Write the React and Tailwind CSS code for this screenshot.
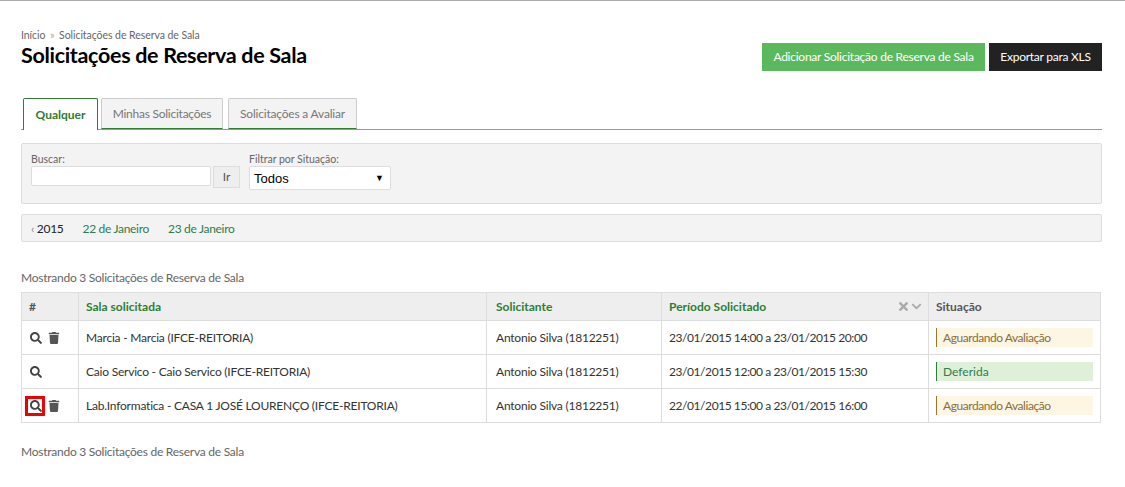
import { FaSearch, FaTrash, FaTimes, FaChevronDown } from 'react-icons/fa'

const rows = [
  { sala: 'Marcia - Marcia (IFCE-REITORIA)', periodo: '23/01/2015 14:00 a 23/01/2015 20:00', situacao: 'Aguardando Avaliação', ok: false, trash: true },
  { sala: 'Caio Servico - Caio Servico (IFCE-REITORIA)', periodo: '23/01/2015 12:00 a 23/01/2015 15:30', situacao: 'Deferida', ok: true, trash: false },
  { sala: 'Lab.Informatica - CASA 1 JOSÉ LOURENÇO (IFCE-REITORIA)', periodo: '22/01/2015 15:00 a 23/01/2015 16:00', situacao: 'Aguardando Avaliação', ok: false, trash: true, marked: true },
]

const Status = ({ ok, children }) => (
  <span className={ok
    ? 'flex items-center h-[19px] pl-[6px] border-l border-[#2e7d32] bg-[#dff0d8] text-[#2e7d4f]'
    : 'flex items-center h-[19px] pl-[6px] border-l border-[#a3722c] bg-[#fcf6e3] text-[#8a6d3b] tracking-[-0.45px]'}>
    {children}
  </span>
)

const App = () => {
  return (
    <div className="min-h-screen bg-white border-t border-[#aaaaaa] font-['Lato',sans-serif] text-[12px] text-[#333333] pl-[21px] pr-[23px] h-[487px] overflow-hidden">
      <div className="flex justify-between">
        <div className="pt-[28px]">
          <div className="text-[10.5px] leading-[13px] text-[#666666] tracking-[-0.06px]">
            Início <span className="mx-[2px] text-[#aaaaaa]">»</span> Solicitações de Reserva de Sala
          </div>
          <h1 className="text-[21.5px] leading-[26px] font-bold text-black tracking-[-0.32px]">Solicitações de Reserva de Sala</h1>
        </div>
        <div className="flex gap-[4px] pt-[42px] tracking-[-0.25px]">
          <button className="h-[28px] w-[223px] bg-[#5cb85c] text-white">Adicionar Solicitação de Reserva de Sala</button>
          <button className="h-[28px] w-[113px] bg-[#222222] text-white">Exportar para XLS</button>
        </div>
      </div>

      <div className="flex items-end h-[32px] mt-[27px] pl-[2px] border-b border-[#999999]">
        <div className="flex items-center justify-center w-[75px] h-[32px] -mb-px bg-white border border-b-0 border-[#2e7d32] rounded-t-[2px] font-bold text-[#2e7d32]">Qualquer</div>
        <div className="flex items-center justify-center w-[122px] h-[31px] ml-[3px] bg-[#f3f3f3] border border-[#cccccc] border-b-[#2e7d32] rounded-t-[2px] text-[#777777] tracking-[-0.25px]">Minhas Solicitações</div>
        <div className="flex items-center justify-center w-[129px] h-[31px] ml-[5px] bg-[#f3f3f3] border border-[#cccccc] border-b-[#2e7d32] rounded-t-[2px] text-[#777777] tracking-[-0.2px]">Solicitações a Avaliar</div>
      </div>

      <div className="flex gap-[9px] h-[61px] mt-[13px] px-[9px] pt-[9px] bg-[#f3f3f3] border border-[#dddddd] rounded-[2px]">
        <div>
          <label className="block text-[10.5px] leading-[13px] text-[#666666]">Buscar:</label>
          <div className="flex gap-[2px]">
            <input className="w-[180px] h-[20px] bg-white border border-[#dddddd] rounded-[2px]" />
            <button className="w-[27px] h-[22px] bg-[#eeeeee] border border-[#dddddd] text-[#555555]">Ir</button>
          </div>
        </div>
        <div>
          <label className="block text-[10.5px] leading-[13px] text-[#666666]">Filtrar por Situação:</label>
          <div className="flex items-center justify-between w-[142px] h-[24px] pl-[4px] pr-[6px] pt-[1px] bg-white border border-[#dddddd] rounded-[2px] font-['Liberation_Sans',sans-serif] text-[13px] text-black">
            <span>Todos</span>
            <span className="text-[9px]">▼</span>
          </div>
        </div>
      </div>

      <div className="flex items-center gap-[19px] h-[28px] mt-[10px] px-[9px] pt-[1px] bg-[#f3f3f3] border border-[#dddddd] rounded-[2px] tracking-[-0.3px]">
        <span className="text-[#222222]"><span className="text-[#888888]">‹</span> 2015</span>
        <span className="text-[#2e7d4f]">22 de Janeiro</span>
        <span className="text-[#2e7d4f]">23 de Janeiro</span>
      </div>

      <p className="mt-[28px] leading-[16px] text-[#666666] tracking-[-0.25px]">Mostrando 3 Solicitações de Reserva de Sala</p>

      <table className="relative mt-[6px] w-[1080px] table-fixed border-collapse border border-[#dddddd]">
        <colgroup>
          <col className="w-[57px]" />
          <col className="w-[408px]" />
          <col className="w-[175px]" />
          <col className="w-[267px]" />
          <col />
        </colgroup>
        <thead>
          <tr className="h-[28px] bg-[#eeeeee] text-left">
            <th className="pl-[7px] border border-[#dddddd] font-bold text-[#555555]">#</th>
            <th className="pl-[7px] border border-[#dddddd] font-bold text-[#2e7d32]">Sala solicitada</th>
            <th className="pl-[9px] border border-[#dddddd] font-bold text-[#2e7d32]">Solicitante</th>
            <th className="pl-[7px] pr-[6px] border border-[#dddddd] font-bold text-[#2e7d32]">
              <div className="flex items-center justify-between">
                <span>Período Solicitado</span>
                <span className="flex items-center gap-[1px] text-[#aaaaaa]"><FaTimes size={13} /><FaChevronDown size={11} /></span>
              </div>
            </th>
            <th className="pl-[7px] border border-[#dddddd] font-bold text-[#555555]">Situação</th>
          </tr>
        </thead>
        <tbody>
          {rows.map((row) => (
            <tr key={row.periodo} className="h-[34px]">
              <td className="pl-[8px] border border-[#dddddd]">
                <div className="relative flex items-center gap-[6px] text-[#444444]">
                  <FaSearch size={12} />
                  {row.trash && <FaTrash size={12} className="text-[#555555]" />}
                  {row.marked && <span className="absolute left-[-5px] top-[-4px] w-[20px] h-[20px] border-[3px] border-[#ee0000]" />}
                </div>
              </td>
              <td className="pl-[7px] border border-[#dddddd] tracking-[-0.22px]">{row.sala}</td>
              <td className="pl-[9px] border border-[#dddddd] tracking-[-0.22px]">Antonio Silva (1812251)</td>
              <td className="pl-[7px] border border-[#dddddd] tracking-[-0.43px]">{row.periodo}</td>
              <td className="pl-[7px] pr-[7px] border border-[#dddddd]"><Status ok={row.ok}>{row.situacao}</Status></td>
            </tr>
          ))}
        </tbody>
      </table>

      <p className="mt-[21px] leading-[16px] text-[#666666] tracking-[-0.25px]">Mostrando 3 Solicitações de Reserva de Sala</p>
    </div>
  )
}

export default App
